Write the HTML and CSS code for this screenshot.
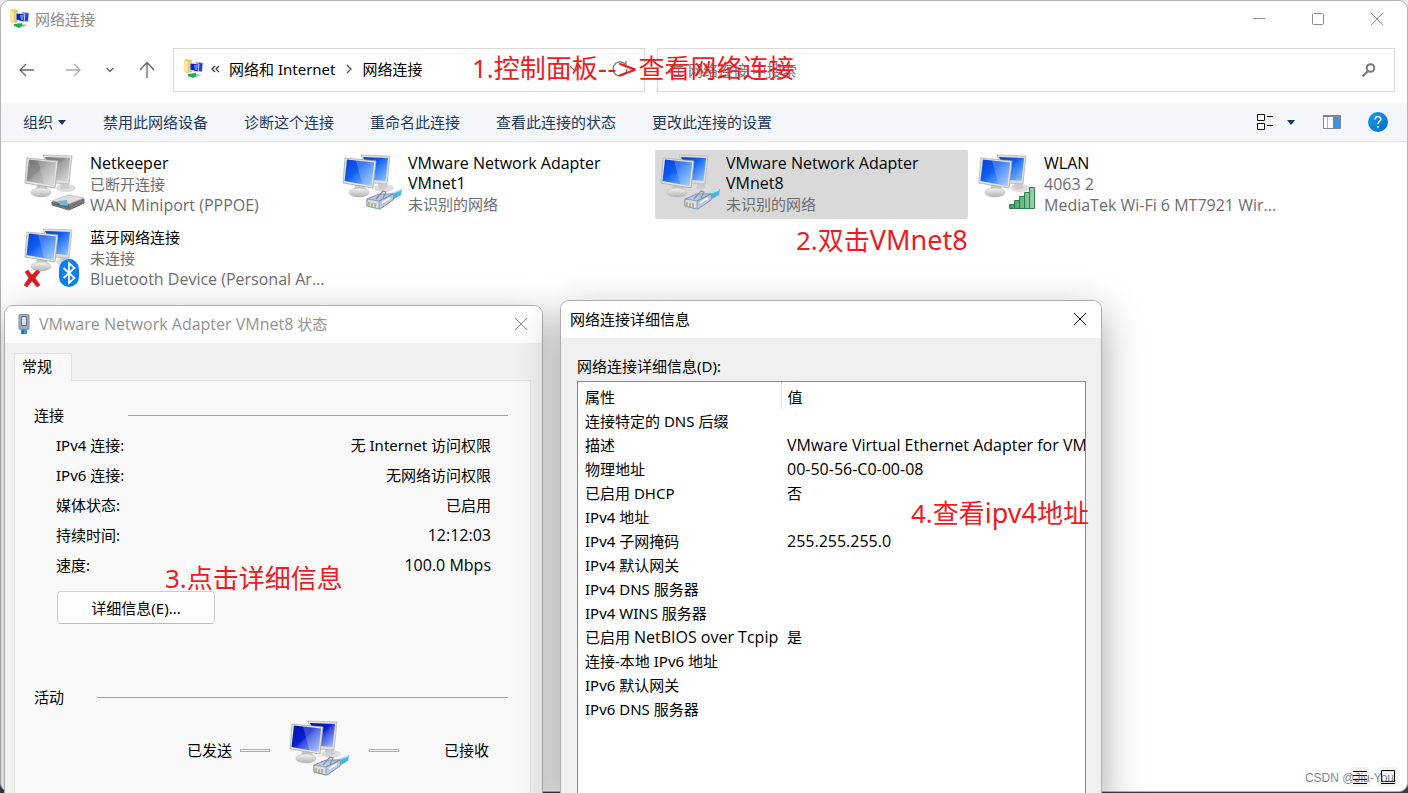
FILE: index.html
```
<!DOCTYPE html>
<html lang="zh-CN">
<head>
<meta charset="utf-8">
<title>网络连接</title>
<link rel="stylesheet" href="styles.css">
</head>
<body>
<svg class="defs" aria-hidden="true">
  <defs>
    <linearGradient id="blue" x1="0" y1="0" x2="1" y2="1">
      <stop offset="0" stop-color="#0a3fd0"/><stop offset=".4" stop-color="#0f5cf0"/><stop offset=".5" stop-color="#2774f6"/><stop offset="1" stop-color="#9accff"/>
    </linearGradient>
    <linearGradient id="navy" x1="0" y1="0" x2="1" y2="1">
      <stop offset="0" stop-color="#0010a8"/><stop offset=".45" stop-color="#0a20cc"/><stop offset=".5" stop-color="#2a45dc"/><stop offset="1" stop-color="#b4c8ff"/>
    </linearGradient>
    <linearGradient id="gray" x1="0" y1="0" x2="1" y2="1">
      <stop offset="0" stop-color="#757575"/><stop offset=".4" stop-color="#8c8c8c"/><stop offset=".45" stop-color="#a0a0a0"/><stop offset="1" stop-color="#dcdcdc"/>
    </linearGradient>
    <linearGradient id="metal" x1="0" y1="0" x2="0" y2="1">
      <stop offset="0" stop-color="#f6f6f4"/><stop offset="1" stop-color="#b2b2b2"/>
    </linearGradient>
    <linearGradient id="bars" x1="0" y1="0" x2="1" y2="0">
      <stop offset="0" stop-color="#3f9a60"/><stop offset="1" stop-color="#9bd6ac"/>
    </linearGradient>
    <linearGradient id="help" x1="0" y1="0" x2="1" y2="1">
      <stop offset="0" stop-color="#1a9fe0"/><stop offset="1" stop-color="#0468d4"/>
    </linearGradient>
    <symbol id="monitors" viewBox="0 0 62 62">
      <ellipse cx="42" cy="35" rx="10" ry="4" fill="#ddd"/>
      <path d="M36 30h8l2 5-9 2z" fill="#ccc"/>
      <path d="M19 2l29 1-3 28-15-1z" fill="#dededb" stroke="#b7b7b4" stroke-width=".8"/>
      <path d="M21 4l25 1-2.500 23-12-1z"/>
      <path d="M13 32h10l1 6H12z" fill="#c6c6c4"/>
      <ellipse cx="17" cy="39.500" rx="10" ry="4.500" fill="url(#metal)" stroke="#bbb" stroke-width=".6"/>
      <path d="M3 5l31 3-3 27-30-5z" fill="#e6e6e3" stroke="#a9a9a6" stroke-width=".8"/>
      <path d="M5 6.500l27 3-2.500 23.500-27-5z"/>
      <path d="M14 7.500l18 2-2.500 23.500-9-1.500z" fill="#fff" opacity=".2"/>
    </symbol>
    <symbol id="plug" viewBox="0 0 62 62">
      <path d="M47 42l13-6-1 6-9 5z" fill="#49b6dc"/>
      <path d="M48 41l11-4" stroke="#a5e6f5" stroke-width="1.500"/>
      <path d="M25 46l12-5 15 0-1 6-13 9-13-3z" fill="#b9c8df" stroke="#8292b0"/>
      <path d="M25 46l12 2 0 8-12-3z" fill="#d8deea" stroke="#8292b0" stroke-width=".8"/>
      <path d="M27 49v4M30 50v4M33 50v5" stroke="#b5aa5f" stroke-width="1.500"/>
      <path d="M37 48l14-7M34 46l7-8 3 1-3 6" fill="none" stroke="#7d8eac" stroke-width="1.200"/>
      <path d="M40 50l8-5" stroke="#f4f8ff" stroke-width="2"/>
    </symbol>
    <symbol id="modem" viewBox="0 0 62 62">
      <path d="M28 49l16-6 16 3v4l-15 7-17-5z" fill="#777" stroke="#666"/>
      <path d="M28 48l16-6 16 3-15 6z" fill="#dededc" stroke="#aaa" stroke-width=".6"/>
      <path d="M30 50l15 2v3l-15-4z" fill="#386f89"/>
      <path d="M34 48l9-1 1 6-8-1z" fill="#75b5cf"/>
    </symbol>
    <symbol id="folder" viewBox="0 0 20 20">
      <path d="M0 1l3-1 5 1v12l-4 1-4-1z" fill="#e9c965"/>
      <path d="M0 1l4 2v11l-4-1z" fill="#f8e6a0"/>
      <path d="M12 3l7 1-1 9-6-1z" fill="#1c41c8" stroke="#d5d9e2" stroke-width=".7"/>
      <path d="M6 4l9 1-1 8-8-2z" fill="#0c25b5" stroke="#d4d7df"/>
      <path d="M10 6l4 0-1 5-2 0z" fill="#5d83ed"/>
      <path d="M4 15l8-1 1 3-4 2-5-2z" fill="#25ac59"/>
      <path d="M12 15l6 1-5 2z" fill="#9cc8ae"/>
    </symbol>
  </defs>
</svg>

<main class="explorer">
  <header class="titlebar">
    <svg class="ico20"><use href="#folder"/></svg>
    <h1>网络连接</h1>
    <div class="caption">
      <button aria-label="最小化"><svg width="12" height="12"><path d="M0 5.500h12"/></svg></button>
      <button aria-label="最大化"><svg width="12" height="12"><rect x=".5" y=".5" width="11" height="11" rx="1"/></svg></button>
      <button aria-label="关闭"><svg width="12" height="12"><path d="M0 0l12 12M12 0L0 12"/></svg></button>
    </div>
  </header>

  <nav class="navrow">
    <div class="arrows">
      <button aria-label="后退"><svg width="16" height="16"><path d="M15 8H1.500M7 2L1 8l6 6"/></svg></button>
      <button aria-label="前进" class="dim"><svg width="16" height="16"><path d="M1 8h13.500M9 2l6 6-6 6"/></svg></button>
      <button aria-label="最近"><svg width="16" height="16"><path d="M4.500 6L8 9.500 11.500 6"/></svg></button>
      <button aria-label="向上"><svg width="16" height="18"><path d="M8 17V2M1 9l7-7.500L15 9"/></svg></button>
    </div>
    <div class="address">
      <svg class="ico20"><use href="#folder"/></svg>
      <svg class="dbl" width="10" height="8"><path d="M4 1L1 4l3 3M8 1L5 4l3 3"/></svg>
      <a href="#">网络和 Internet</a>
      <svg class="sep" width="6" height="10"><path d="M1 1l4 4-4 4"/></svg>
      <a href="#">网络连接</a>
      <span class="tools">
        <button aria-label="展开"><svg width="12" height="8"><path d="M1 1l5 5 5-5"/></svg></button>
        <button aria-label="刷新"><svg width="18" height="18"><path d="M14 4a7 7 0 1 0 2 5M15 1v4h-4"/></svg></button>
      </span>
    </div>
    <label class="search">
      <input type="text" placeholder="在 网络连接 中搜索" aria-label="搜索">
      <svg width="14" height="14"><circle cx="8.500" cy="5" r="3.800"/><path d="M6 8l-5.500 5.500"/></svg>
    </label>
  </nav>

  <div class="toolbar">
    <button class="menu">组织<i class="caret"></i></button>
    <button>禁用此网络设备</button>
    <button>诊断这个连接</button>
    <button>重命名此连接</button>
    <button>查看此连接的状态</button>
    <button>更改此连接的设置</button>
    <div class="views">
      <button aria-label="更改视图"><svg width="18" height="18"><path d="M1.500 1.500h7v6h-7zM1.500 10.500h7v6h-7z" fill="#fff" stroke="#111"/><path d="M11 3.500h6M11 12.500h6" stroke="#111"/></svg></button>
      <button aria-label="更多选项"><i class="caret"></i></button>
      <button aria-label="预览窗格"><svg width="18" height="14"><path d="M.5.500h17v13H.5z" fill="#fff" stroke="#80858c"/><path d="M0 1h18" stroke="#80858c" stroke-width="2"/><path d="M4.500 2v11" stroke="#b5b5b5"/><path d="M10 2h7v11h-7z" fill="#3c94e4"/></svg></button>
      <button aria-label="帮助"><svg width="20" height="20"><circle cx="10" cy="10" r="10" fill="url(#help)"/><path d="M7.200 7.500c0-4 5.600-3.700 5.600-.3 0 2-2.800 2.200-2.800 4.800" fill="none" stroke="#fff" stroke-width="1.500"/><circle cx="10" cy="14.800" r="1" fill="#fff"/></svg></button>
    </div>
  </div>

  <ul class="items">
    <li class="item">
      <svg class="big"><use href="#monitors" fill="url(#gray)"/><use href="#modem"/></svg>
      <div><h2 class="latin">Netkeeper</h2><p>已断开连接</p><p class="latin">WAN Miniport (PPPOE)</p></div>
    </li>
    <li class="item">
      <svg class="big"><use href="#monitors" fill="url(#blue)"/><use href="#plug"/></svg>
      <div><h2 class="latin">VMware Network Adapter VMnet1</h2><p>未识别的网络</p></div>
    </li>
    <li class="item selected">
      <svg class="big"><use href="#monitors" fill="url(#blue)"/><use href="#plug"/></svg>
      <div><h2 class="latin">VMware Network Adapter VMnet8</h2><p>未识别的网络</p></div>
    </li>
    <li class="item">
      <svg class="big"><use href="#monitors" fill="url(#blue)"/>
        <path d="M31.500 51.500h5v4h-5zM36.500 47.500h5v8h-5zM41.500 43.500h5v12h-5zM46.500 39.500h5v16h-5zM51.500 34.500h5v21h-5z" fill="url(#bars)" stroke="#2f7d4c"/></svg>
      <div><h2 class="latin">WLAN</h2><p class="latin">4063 2</p><p class="latin">MediaTek Wi-Fi 6 MT7921 Wir...</p></div>
    </li>
    <li class="item">
      <svg class="big"><use href="#monitors" fill="url(#blue)"/>
        <rect x="35" y="32" width="20" height="28" rx="10" fill="#0a80f5"/>
        <path d="M39.500 41l11 10-5.500 5V36l5.500 5-11 10" fill="none" stroke="#fff" stroke-width="1.800"/>
        <path d="M1 45l3-2 4 5 5-5 3 2-5 6 5 7-3 2-5-6-5 6-3-2 5-7z" fill="#dd1820" stroke="#c4444a" stroke-width=".8"/></svg>
      <div><h2>蓝牙网络连接</h2><p>未连接</p><p class="latin">Bluetooth Device (Personal Ar...</p></div>
    </li>
  </ul>

  <footer class="status">
    <button aria-label="详细信息视图"><svg width="14" height="14"><path d="M0 1.500h14M0 5.500h14M0 9.500h14M0 13.500h14"/></svg></button>
    <button aria-label="大图标视图"><svg width="14" height="14"><path d="M.5.500h13v11H.5zM0 13.500h14"/></svg></button>
  </footer>
</main>

<section class="dialog dlg-status">
  <header>
    <svg width="12" height="20"><path d="M3 14h6v6H3z" fill="#3a9cc4"/><path d="M5 15v5" stroke="#164f6b"/><rect x="1" y=".5" width="10" height="15" rx="1.500" fill="#9aabc4" stroke="#7b8aa2"/><rect x="3.500" y="2.500" width="5" height="9" fill="#d7e0ec" stroke="#5f7088"/></svg>
    <h2><span class="latin">VMware Network Adapter VMnet8</span> 状态</h2>
    <button aria-label="关闭"><svg width="12" height="12"><path d="M0 0l12 12M12 0L0 12"/></svg></button>
  </header>
  <div class="tabs"><button class="tab">常规</button></div>
  <div class="panel">
    <h3 class="group wide">连接</h3>
    <dl>
      <div><dt>IPv4 连接:</dt><dd>无 Internet 访问权限</dd></div>
      <div><dt>IPv6 连接:</dt><dd>无网络访问权限</dd></div>
      <div><dt>媒体状态:</dt><dd>已启用</dd></div>
      <div><dt>持续时间:</dt><dd class="latin">12:12:03</dd></div>
      <div><dt>速度:</dt><dd class="latin">100.0 Mbps</dd></div>
    </dl>
    <button class="details">详细信息(E)...</button>
    <h3 class="group">活动</h3>
    <div class="activity">
      <span>已发送</span><i class="dash"></i>
      <svg class="big"><use href="#monitors" fill="url(#navy)"/><use href="#plug"/></svg>
      <i class="dash"></i><span class="recv">已接收</span>
    </div>
  </div>
</section>

<section class="dialog dlg-details">
  <header>
    <h2>网络连接详细信息</h2>
    <button aria-label="关闭"><svg width="12" height="12"><path d="M0 0l12 12M12 0L0 12"/></svg></button>
  </header>
  <h3 id="list-label">网络连接详细信息(D):</h3>
  <div class="list">
    <table aria-labelledby="list-label">
      <thead><tr><th>属性</th><th>值</th></tr></thead>
      <tbody>
        <tr><td>连接特定的 DNS 后缀</td><td></td></tr>
        <tr><td>描述</td><td class="latin">VMware Virtual Ethernet Adapter for VMnet8</td></tr>
        <tr><td>物理地址</td><td class="latin">00-50-56-C0-00-08</td></tr>
        <tr><td>已启用 DHCP</td><td>否</td></tr>
        <tr><td>IPv4 地址</td><td></td></tr>
        <tr><td>IPv4 子网掩码</td><td class="latin">255.255.255.0</td></tr>
        <tr><td>IPv4 默认网关</td><td></td></tr>
        <tr><td>IPv4 DNS 服务器</td><td></td></tr>
        <tr><td>IPv4 WINS 服务器</td><td></td></tr>
        <tr><td>已启用 <span class="latin">NetBIOS over Tcpip</span></td><td>是</td></tr>
        <tr><td>连接-本地 IPv6 地址</td><td></td></tr>
        <tr><td>IPv6 默认网关</td><td></td></tr>
        <tr><td>IPv6 DNS 服务器</td><td></td></tr>
      </tbody>
    </table>
  </div>
</section>

<p class="note n1">1.控制面板<span class="arrow">--&gt;</span>查看网络连接</p>
<p class="note n2">2.双击<span class="wide-latin">VMnet8</span></p>
<p class="note n3">3.点击详细信息</p>
<p class="note n4">4.查看<span class="wide-latin">ipv4</span>地址</p>
<p class="watermark">CSDN @Jiu-You</p>
</body>
</html>
```
FILE: styles.css
```
* { box-sizing: border-box; margin: 0; padding: 0; }

body {
  position: relative;
  height: 100vh;
  overflow: hidden;
  background: linear-gradient(#e8e8e8 94px, #3a3c44 94px);
  color: #000;
  font: 15px/20px "Noto Sans", "Noto Sans CJK SC", sans-serif;
}

h1, h2, h3, th { font-size: 15px; font-weight: 400; }
button { border: 0; background: none; color: inherit; font: inherit; }
svg { display: block; flex: none; }
ul { list-style: none; }
a { color: inherit; text-decoration: none; }
.latin { font-family: "Open Sans", "Noto Sans", sans-serif; font-size: 16px; }
.defs { position: absolute; width: 0; height: 0; }
.ico20 { width: 20px; height: 20px; }
.big { width: 62px; height: 62px; }

.explorer {
  display: flex;
  flex-direction: column;
  height: calc(100vh - 1px);
  border: 1px solid #b4b4b4;
  border-radius: 9px;
  background: #fff;
}

.titlebar { display: flex; align-items: center; gap: 5px; height: 36px; padding-left: 9px; color: #8c8c8c; }
.caption { display: flex; margin-left: auto; padding-right: 1px; }
.caption button { display: grid; place-items: center; width: 59px; height: 36px; }
.caption svg, .dialog header button svg { fill: none; stroke: currentColor; }

.navrow { display: flex; align-items: center; padding: 11px 12px 11px 7px; }
.arrows { display: flex; align-items: center; flex: none; width: 165px; color: #666; }
.arrows button { display: grid; place-items: center; width: 38px; height: 36px; }
.arrows .dim { width: 54px; }
.arrows button:nth-child(3) { width: 20px; }
.arrows button:nth-child(4) { width: 53px; }
.arrows svg, .address > .dbl, .address > .sep, .tools svg, .search svg { fill: none; stroke: currentColor; stroke-width: 1.3; }
.arrows .dim { color: #aaa; }

.address { display: flex; align-items: center; flex: 0 1 472px; height: 44px; padding: 0 15px 2px 10px; border: 1px solid #d9d9d9; }
.address a { white-space: nowrap; }
.dbl { margin: 0 8px 0 7px; color: #333; }
.sep { margin: 0 10px 0 11px; color: #555; }
.tools { display: flex; align-items: center; gap: 30px; margin-left: auto; color: #777; }

.search { display: flex; align-items: center; flex: 1; height: 44px; margin-left: 12px; padding: 0 18px 0 11px; border: 1px solid #d9d9d9; color: #777; }
.search svg { stroke-width: 2; }
.search input { flex: 1; min-width: 0; border: 0; outline: 0; background: none; font: inherit; }
.search input::placeholder { color: #777; opacity: 1; }

.toolbar { display: flex; align-items: center; gap: 36px; height: 39px; padding: 0 19px 0 22px; border-bottom: 1px solid #e5e7e9; background: #f4f6f9; color: #1e395b; }
.toolbar button { display: flex; align-items: center; }
.menu { padding-right: 1px; }
.views { display: flex; align-items: center; margin-left: auto; }
.views button + button { margin-left: 13px; }
.views button:nth-child(n+3) { margin-left: 27px; }
.caret { width: 0; margin-left: 5px; border: 4px solid transparent; border-top: 5px solid #1a355b; border-bottom: 0; }
.views .caret { margin: 0 1px 0 0; }

.items { display: grid; grid-template-columns: repeat(auto-fill, 313px); gap: 5px; padding: 8px 18px; }
.item { display: flex; gap: 4px; height: 69px; padding: 3px 0 0 5px; border-radius: 2px; }
.item > div { flex: 1; min-width: 0; padding-right: 3px; }
.item h2 { max-width: 220px; margin-bottom: 1px; }
.item p { overflow: hidden; color: #6d6d6d; line-height: 21px; white-space: nowrap; text-overflow: ellipsis; }
.item.selected { background: #d9d9d9; }

.status { display: flex; justify-content: flex-end; gap: 8px; margin-top: auto; padding: 0 9px 4px 0; }
.status button { padding: 3px; border-radius: 3px; background: #f3f3f3; }
.status svg { fill: none; stroke: #000; }

/* Dialog windows float over the explorer and run past the bottom edge. */
.dialog {
  position: absolute;
  bottom: -10px;
  border: 1px solid #adadad;
  border-radius: 9px;
  background: #f0f0f0;
  box-shadow: 0 10px 36px rgba(0, 0, 0, .3);
  overflow: hidden;
}
.dialog header { display: flex; align-items: center; height: 37px; padding: 0 15px 2px 13px; background: #fff; }
.dialog header button { margin-left: auto; }

.dlg-status { top: 305px; left: 4px; width: 539px; }
.dlg-status header { gap: 9px; color: #929292; }
.tabs { display: flex; padding: 10px 9px 0; }
.tab { position: relative; z-index: 1; height: 28px; margin-bottom: -1px; padding: 0 19px 3px 7px; border: 1px solid #e2e2e2; border-bottom: 0; background: #f9f9f9; }
.panel { height: 100%; margin: 0 11px 0 9px; padding: 24px 22px 0 19px; border: 1px solid #e2e2e2; background: #f9f9f9; }
.group { display: flex; align-items: center; gap: 33px; }
.group::after { content: ""; flex: 1; height: 1px; background: #a0a0a0; }
.group.wide { gap: 64px; }
.panel dl { padding: 5px 17px 0 22px; }
.panel dl div { display: flex; justify-content: space-between; align-items: center; height: 30px; }
.details { display: block; width: 158px; height: 33px; margin: 11px 0 63px 23px; border: 1px solid #cfcfcf; border-bottom-color: #b8b8b8; border-radius: 4px; background: #fefefe; }
.activity { display: flex; align-items: center; padding: 12px 19px 0 153px; }
.activity .big { margin: 0 18px 0 19px; }
.dash { width: 30px; height: 3px; border: 1px solid #aaa; }
.activity span + .dash { margin-left: 8px; }
.recv { margin-left: auto; }

.dlg-details { top: 300px; left: 560px; width: 542px; box-shadow: 0 14px 42px rgba(0, 0, 0, .36); }
.dlg-details header { padding-left: 9px; }
.dlg-details h3 { padding: 18px 16px 5px; }
.list { height: 100%; margin: 0 15px 0 16px; border: 1px solid #828790; background: #fff; overflow: hidden; }
.list table { width: 100%; border-collapse: collapse; table-layout: fixed; text-align: left; }
.list th, .list td { height: 24px; padding: 0 0 0 7px; overflow: hidden; white-space: nowrap; }
.list th { height: 27px; padding-top: 2px; }
.list th:first-child { width: 203px; border-right: 1px solid #e2e2e2; }
.list td:last-child, .list th:last-child { padding-left: 6px; }

/* Annotations */
.note { position: absolute; color: #ed1c24; font-size: 26px; line-height: 36px; white-space: nowrap; }
.arrow { font-family: "DejaVu Sans", sans-serif; }
.wide-latin { font-size: 27px; }
.n1 { top: 50px; left: 472px; }
.n2 { top: 222px; left: 796px; }
.n3 { top: 560px; left: 165px; }
.n4 { top: 495px; left: 911px; }
.watermark { position: absolute; right: 14px; bottom: 5px; color: rgba(90, 90, 90, .75); font: 12px/20px "Liberation Sans", sans-serif; }
```
